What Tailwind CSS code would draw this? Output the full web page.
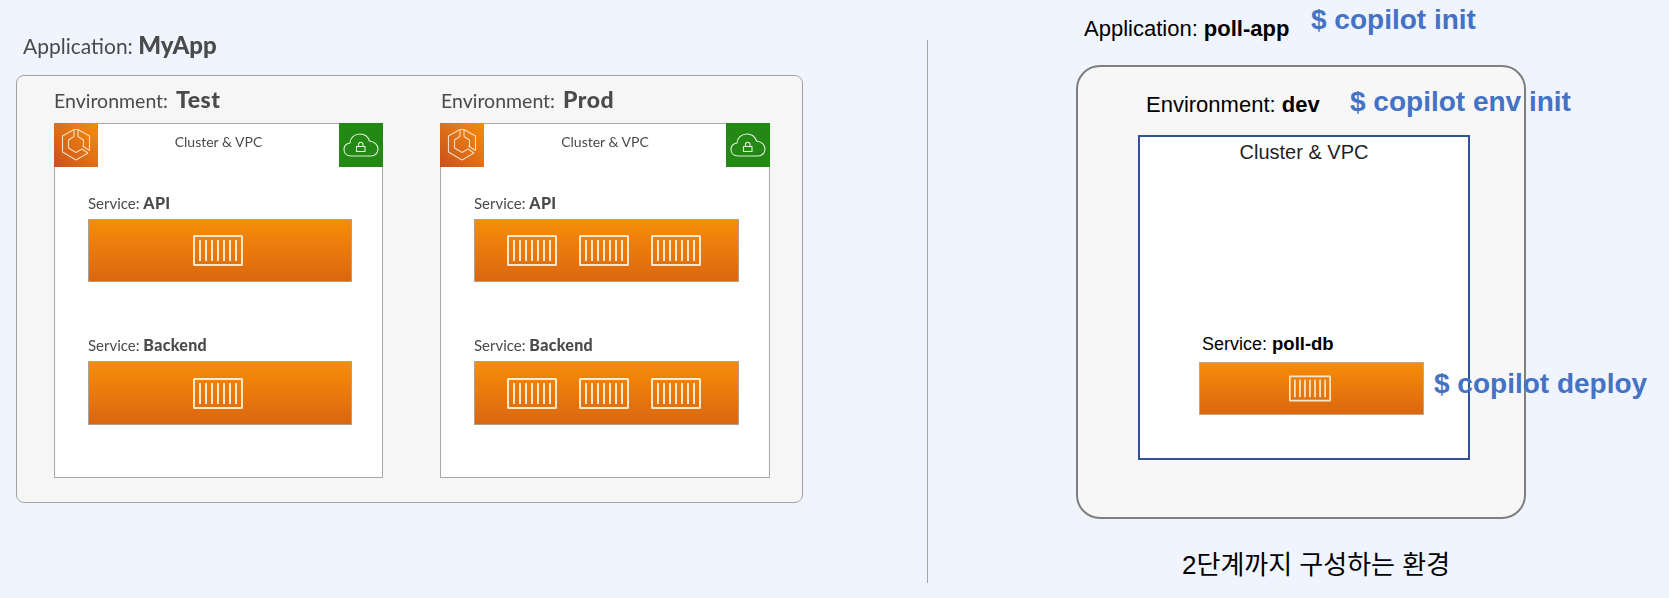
<!DOCTYPE html>
<html lang="en">
<head>
    <meta charset="UTF-8">
    <meta name="viewport" content="width=device-width, initial-scale=1.0">
    <title>Copilot environments</title>
    <script src="https://cdn.jsdelivr.net/npm/@tailwindcss/browser@4"></script>
</head>
<body class="bg-[#f0f4fe] overflow-hidden">
    <!-- shared icons -->
    <svg class="hidden">
        <symbol id="box" viewBox="0 0 50 31">
            <rect x="1" y="1" width="48" height="29" rx="0.5" fill="none" stroke="#fde7c9" stroke-width="2"/>
            <path d="M7 5v21M13 5v21M19 5v21M25 5v21M31 5v21M37 5v21M43 5v21" fill="none" stroke="#fde7c9" stroke-width="2"/>
        </symbol>
        <symbol id="ecs" viewBox="0 0 44 44">
            <g fill="none" stroke="#fbdcc0" stroke-width="1.1" stroke-linejoin="round">
                <path d="M20 6.500 8.500 13V29L22 37 34 30"/>
                <path d="M24 6.500 35.500 13V27.500"/>
                <path d="M20 6.500V13.500M24 6.500V13.500M20 6.500H24"/>
                <path d="M20 13.500 14.500 17V25L22 29.500 28 26"/>
                <path d="M24 13.500 29.500 17V23.500"/>
                <path d="M28.500 23 35.500 27.500M28 26 34 30"/>
            </g>
        </symbol>
        <symbol id="vpc" viewBox="0 0 44 44">
            <g fill="none" stroke="#e3f1df" stroke-width="1.1" stroke-linejoin="round">
                <path d="M12 33C7.500 33 5 30 5 26.500 5 23 7.500 20.500 11 20 11 15 15.500 11 21 11 25.500 11 29 13.500 30.500 18 35.500 18.500 39 22 39 26 39 30 36 33 32 33Z"/>
                <rect x="17.500" y="23.500" width="8.500" height="5"/>
                <path d="M19.500 23.500V21.500A2.200 2.200 0 0 1 24 21.500V23.500"/>
            </g>
        </symbol>
    </svg>

    <div class="flex w-[1669px] h-[598px]">
        <!-- left: MyApp diagram -->
        <div class="w-[927px] pl-4 font-['Lato',sans-serif] text-[#4a4a4a] blur-[0.4px]">
            <div class="h-[75px] pt-[32px] pl-[7px] text-[21px] leading-[26px]">Application: <b class="font-black text-[24px]">MyApp</b></div>
            <div class="w-[787px] h-[428px] border border-[#a3a3a3] rounded-lg bg-[#f6f6f6] flex gap-[57px] pl-[37px]">

                <div class="w-[329px]">
                    <div class="h-[47px] flex items-center text-[19.500px]"><span>Environment: <b class="ml-[3px] font-black text-[23px] tracking-[0.5px]">Test</b></span></div>
                    <div class="h-[355px] border border-[#a8a8a8] bg-white">
                        <div class="flex justify-between h-[44px] -m-px">
                            <div class="w-[44px] h-[44px] bg-linear-to-tr from-[#c8511b] to-[#f68d07]"><svg class="w-[44px] h-[44px]"><use href="#ecs"/></svg></div>
                            <div class="text-sm leading-5 pt-[9px]">Cluster &amp; VPC</div>
                            <div class="w-[44px] h-[44px] bg-[#248814]"><svg class="w-[44px] h-[44px]"><use href="#vpc"/></svg></div>
                        </div>
                        <div class="pl-[33px] pr-[30px]">
                            <div class="mt-[27px] h-5 text-[15px] leading-5">Service: <b class="font-black text-[16px] tracking-[0.3px]">API</b></div>
                            <div class="mt-[6px] h-[63px] border border-[#b0a090] bg-linear-to-b from-[#f68d07] to-[#db660f] flex items-center justify-center pr-[4px]">
                                <svg class="w-[50px] h-[31px]"><use href="#box"/></svg>
                            </div>
                            <div class="mt-[53px] h-5 text-[15px] leading-5">Service: <b class="font-black text-[16px] tracking-[0.3px]">Backend</b></div>
                            <div class="mt-[6px] h-[64px] border border-[#b0a090] bg-linear-to-b from-[#f68d07] to-[#db660f] flex items-center justify-center pr-[4px]">
                                <svg class="w-[50px] h-[31px]"><use href="#box"/></svg>
                            </div>
                        </div>
                    </div>
                </div>

                <div class="w-[330px]">
                    <div class="h-[47px] pl-px flex items-center text-[19.500px]"><span>Environment: <b class="ml-[3px] font-black text-[23px] tracking-[0.5px]">Prod</b></span></div>
                    <div class="h-[355px] border border-[#a8a8a8] bg-white">
                        <div class="flex justify-between h-[44px] -m-px">
                            <div class="w-[44px] h-[44px] bg-linear-to-tr from-[#c8511b] to-[#f68d07]"><svg class="w-[44px] h-[44px]"><use href="#ecs"/></svg></div>
                            <div class="text-sm leading-5 pt-[9px]">Cluster &amp; VPC</div>
                            <div class="w-[44px] h-[44px] bg-[#248814]"><svg class="w-[44px] h-[44px]"><use href="#vpc"/></svg></div>
                        </div>
                        <div class="pl-[33px] pr-[30px]">
                            <div class="mt-[27px] h-5 text-[15px] leading-5">Service: <b class="font-black text-[16px] tracking-[0.3px]">API</b></div>
                            <div class="mt-[6px] h-[63px] border border-[#b0a090] bg-linear-to-b from-[#f68d07] to-[#db660f] flex items-center justify-center gap-[22px] pr-[5px]">
                                <svg class="w-[50px] h-[31px]"><use href="#box"/></svg>
                                <svg class="w-[50px] h-[31px]"><use href="#box"/></svg>
                                <svg class="w-[50px] h-[31px]"><use href="#box"/></svg>
                            </div>
                            <div class="mt-[53px] h-5 text-[15px] leading-5">Service: <b class="font-black text-[16px] tracking-[0.3px]">Backend</b></div>
                            <div class="mt-[6px] h-[64px] border border-[#b0a090] bg-linear-to-b from-[#f68d07] to-[#db660f] flex items-center justify-center gap-[22px] pr-[5px]">
                                <svg class="w-[50px] h-[31px]"><use href="#box"/></svg>
                                <svg class="w-[50px] h-[31px]"><use href="#box"/></svg>
                                <svg class="w-[50px] h-[31px]"><use href="#box"/></svg>
                            </div>
                        </div>
                    </div>
                </div>
            </div>
        </div>

        <!-- divider -->
        <div class="w-px mt-[40px] mb-[15px] bg-[#a6a6a6]"></div>

        <!-- right: poll-app diagram -->
        <div class="relative flex-1 font-['Liberation_Sans',sans-serif] text-black">
            <div class="h-[65px] pt-[17px] pl-[156px] text-[22px] leading-6">Application: <b>poll-app</b></div>
            <div class="ml-[148px] w-[450px] h-[454px] border-2 border-[#7f7f7f] rounded-[24px] bg-[#f7f7f7] pl-[60px]">
                <div class="h-[68px] pt-[26px] pl-2 text-[22px] leading-6">Environment: <b>dev</b></div>
                <div class="w-[332px] h-[325px] border-2 border-[#2f5597] bg-white">
                    <div class="h-[27px] pt-[4px] text-center text-[20px] leading-[22px] text-[#1f1f1f]">Cluster &amp; VPC</div>
                    <div class="mt-[170px] pl-[59px]">
                        <div class="h-5 pl-[3px] text-[18px] leading-5">Service: <b class="text-[18.500px]">poll-db</b></div>
                        <div class="mt-[8px] w-[225px] h-[53px] border border-[#c0a890] bg-linear-to-b from-[#f68d07] to-[#db660f] flex items-center justify-center pr-[4px]">
                            <svg class="w-[42px] h-[29px]" preserveAspectRatio="none"><use href="#box"/></svg>
                        </div>
                    </div>
                </div>
            </div>
            <div class="mt-[31px] pl-[254px] text-[26px] leading-[30px] font-['Liberation_Sans','Noto_Sans_CJK_KR',sans-serif]">2단계까지 구성하는 환경</div>

            <!-- commands sit on top of the boxes -->
            <div class="absolute left-[383px] top-[3px] text-[28px] leading-[34px] font-bold text-[#4472c4]">$ copilot init</div>
            <div class="absolute left-[422px] top-[85px] text-[28px] leading-[34px] font-bold text-[#4472c4]">$ copilot env init</div>
            <div class="absolute left-[506px] top-[367px] text-[28px] leading-[34px] font-bold text-[#4472c4]">$ copilot deploy</div>
        </div>
    </div>
</body>
</html>
